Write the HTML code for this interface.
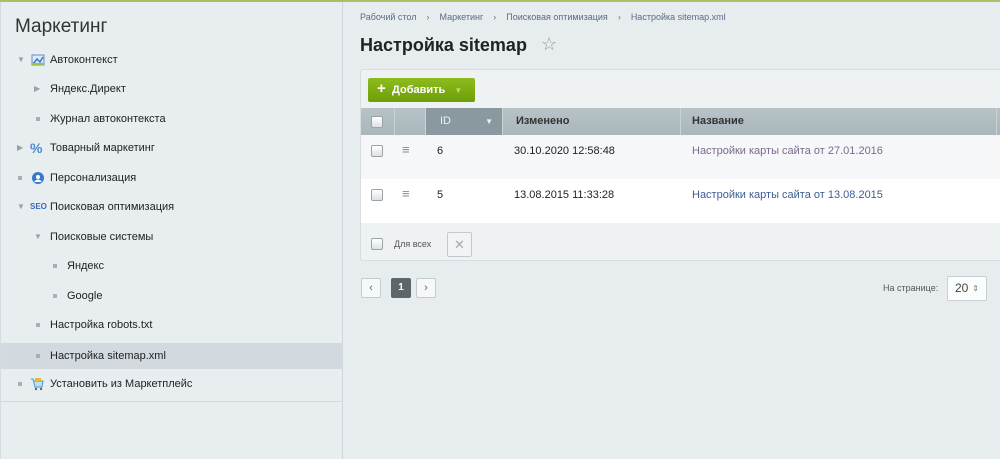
<!DOCTYPE html>
<html><head><meta charset="utf-8"><style>
*{margin:0;padding:0;box-sizing:border-box}
body{width:1000px;height:459px;overflow:hidden;background:#e7ecee;font-family:"Liberation Sans",sans-serif;position:relative}
.top{position:absolute;left:0;top:0;width:1000px;height:2px;background:#a8c06a}
.side{position:absolute;left:0;top:2px;width:343px;height:457px;background:#e8edf0;border-right:1px solid #cfd6da;border-left:1px solid #d5dbde}
.side h1{position:absolute;left:14px;top:14px;font-size:19px;font-weight:normal;color:#333}
.it{position:absolute;left:0;width:342px;height:26px;font-size:11px;color:#222;line-height:26px}
.it.sel{background:#d3dadf}
.mk{position:absolute;top:0;font-size:8px;color:#97a1a6}
.dot{position:absolute;top:11px;width:4px;height:4px;background:#a8b0b4}
.ic{position:absolute;top:6px;width:14px;height:14px}
.main{position:absolute;left:344px;top:2px;right:0;bottom:0}
.bc{position:absolute;left:16px;top:10px;font-size:9px;color:#5c6c84}
.bc span{margin:0 10px;color:#777}
.title{position:absolute;left:16px;top:33px;font-size:18px;font-weight:bold;color:#222}
.star{position:absolute;left:197px;top:32px;font-size:18px;color:#999}
.panel{position:absolute;left:16px;top:67px;width:650px;height:192px;background:#eef2f3;border:1px solid #d6dcdf;border-radius:3px}
.btn{position:absolute;left:7px;top:8px;width:107px;height:24px;background:linear-gradient(#8ebc1e,#6d9e08);border-radius:2px;color:#fff;font-weight:bold;font-size:11px;line-height:24px;padding-left:24px}
.btn:before{content:"+";position:absolute;left:9px;top:-1px;font-size:15px}
.hdr{position:absolute;left:0;top:38px;width:650px;height:27px;background:linear-gradient(#b7c3c7,#a9b6bb)}
.hdr div{position:absolute;top:0;height:27px;line-height:27px;font-size:11px;font-weight:bold;color:#333;border-left:1px solid #c9d2d5}
.row{position:absolute;left:0;width:650px;height:44px;font-size:11px;color:#222}
.cb{position:absolute;width:12px;height:12px;border:1px solid #9aa3a7;border-radius:2px;background:linear-gradient(#fff,#dde2e4)}
.row .t{position:absolute;top:10px}
.pg{position:absolute;top:276px;width:20px;height:20px;border:1px solid #c4cbce;background:#f6f8f9;border-radius:2px;font-size:11px;text-align:center;line-height:18px;color:#666}
</style></head><body>
<div class="top"></div>
<div class="side">
<h1>Маркетинг</h1>
<div class="it" style="top:45px"><span class="mk" style="left:16px">▼</span><svg class="ic" style="left:30px" viewBox="0 0 14 14"><rect x="1" y="2" width="12" height="10" fill="#dfe9f5" stroke="#6a8fc0"/><path d="M2 11 L6 6 L9 9 L12 4" stroke="#3a7ad0" fill="none" stroke-width="1.5"/><rect x="1" y="10" width="12" height="2" fill="#9cc04a"/></svg><span style="position:absolute;left:49px">Автоконтекст</span></div>
<div class="it" style="top:74px"><span class="mk" style="left:33px">▶</span><span style="position:absolute;left:49px">Яндекс.Директ</span></div>
<div class="it" style="top:104px"><span class="dot" style="left:35px"></span><span style="position:absolute;left:49px">Журнал автоконтекста</span></div>
<div class="it" style="top:133px"><span class="mk" style="left:16px">▶</span><span class="ic" style="left:29px;top:0;color:#4a8ad0;font-weight:bold;font-size:14px">%</span><span style="position:absolute;left:49px">Товарный маркетинг</span></div>
<div class="it" style="top:163px"><span class="dot" style="left:17px"></span><svg class="ic" style="left:30px" viewBox="0 0 14 14"><circle cx="7" cy="7" r="6" fill="#3b78c8"/><circle cx="7" cy="6" r="2" fill="#fff"/><path d="M3 11 Q7 6 11 11" fill="#fff"/></svg><span style="position:absolute;left:49px">Персонализация</span></div>
<div class="it" style="top:192px"><span class="mk" style="left:16px">▼</span><span class="ic" style="left:29px;top:0;color:#3a6ab8;font-weight:bold;font-size:8px">SEO</span><span style="position:absolute;left:49px">Поисковая оптимизация</span></div>
<div class="it" style="top:222px"><span class="mk" style="left:33px">▼</span><span style="position:absolute;left:49px">Поисковые системы</span></div>
<div class="it" style="top:251px"><span class="dot" style="left:52px"></span><span style="position:absolute;left:66px">Яндекс</span></div>
<div class="it" style="top:281px"><span class="dot" style="left:52px"></span><span style="position:absolute;left:66px">Google</span></div>
<div class="it" style="top:310px"><span class="dot" style="left:35px"></span><span style="position:absolute;left:49px">Настройка robots.txt</span></div>
<div class="it sel" style="top:341px"><span class="dot" style="left:35px"></span><span style="position:absolute;left:49px">Настройка sitemap.xml</span></div>
<div class="it" style="top:369px"><span class="dot" style="left:17px"></span><svg class="ic" style="left:29px" viewBox="0 0 14 14"><path d="M1 2 H3 L5 10 H12 L13 4 H4" fill="#bfe0f0" stroke="#4a9ac8"/><circle cx="6" cy="12" r="1.2" fill="#666"/><circle cx="11" cy="12" r="1.2" fill="#666"/><rect x="5" y="1" width="6" height="3" fill="#e8b830"/></svg><span style="position:absolute;left:49px">Установить из Маркетплейс</span></div>
<div style="position:absolute;left:0;top:399px;width:342px;height:1px;background:#d3d9dc"></div>
</div>
<div class="main">
<div class="bc">Рабочий стол<span>›</span>Маркетинг<span>›</span>Поисковая оптимизация<span>›</span>Настройка sitemap.xml</div>
<div class="title">Настройка sitemap</div>
<div class="star">☆</div>
<div class="panel">
<div class="btn">Добавить <span style="color:#b8d870;font-size:8px;margin-left:6px">▼</span></div>
<div class="hdr">
<div style="left:0;width:33px;border:none"><span class="cb" style="left:10px;top:8px"></span></div>
<div style="left:33px;width:31px"></div>
<div style="left:64px;width:77px;background:#8a999f;color:#eef;font-weight:normal;padding-left:14px">ID<span style="position:absolute;right:9px;font-size:8px">▼</span></div>
<div style="left:141px;width:178px;padding-left:13px">Изменено</div>
<div style="left:319px;width:316px;padding-left:11px">Название</div>
<div style="left:635px;width:15px"></div>
</div>
<div class="row" style="top:65px;background:#f5f7f8"><span class="cb" style="left:10px;top:10px"></span><span class="t" style="left:41px;color:#888;font-size:13px;top:7px">≡</span><span class="t" style="left:76px">6</span><span class="t" style="left:153px">30.10.2020 12:58:48</span><span class="t" style="left:331px;color:#7c6a8e">Настройки карты сайта от 27.01.2016</span></div>
<div class="row" style="top:109px;background:#fff"><span class="cb" style="left:10px;top:10px"></span><span class="t" style="left:41px;color:#888;font-size:13px;top:7px">≡</span><span class="t" style="left:76px">5</span><span class="t" style="left:153px">13.08.2015 11:33:28</span><span class="t" style="left:331px;color:#3c5c94">Настройки карты сайта от 13.08.2015</span></div>
<span class="cb" style="left:10px;top:168px"></span>
<span style="position:absolute;left:33px;top:169px;font-size:9px;color:#555">Для всех</span>
<div style="position:absolute;left:86px;top:162px;width:25px;height:25px;border:1px solid #c3cacd;background:#f1f3f4;border-radius:2px;color:#aaa;text-align:center;line-height:23px;font-size:13px">✕</div>
</div>
<div class="pg" style="left:17px">‹</div>
<div class="pg" style="left:47px;background:#5c666b;border-color:#5c666b;color:#fff;font-weight:bold;font-size:10px">1</div>
<div class="pg" style="left:72px">›</div>
<span style="position:absolute;left:539px;top:281px;font-size:9px;color:#555">На странице:</span>
<div style="position:absolute;left:603px;top:274px;width:40px;height:25px;border:1px solid #c9d0d3;background:#fbfcfc;border-radius:2px;font-size:12px;color:#444;line-height:23px;padding-left:7px">20<span style="position:absolute;right:7px;font-size:8px;color:#777">⇕</span></div>
</div>
</body></html>
